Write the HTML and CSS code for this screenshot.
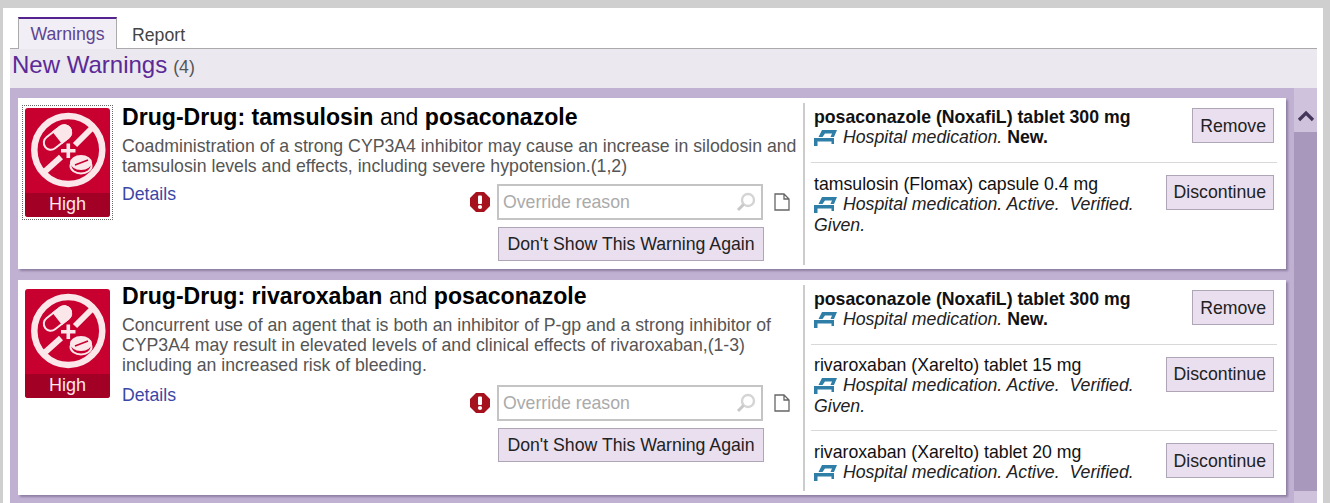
FILE: index.html
```html
<!DOCTYPE html>
<html lang="en">
<head>
    <meta charset="UTF-8">
    <title>Warnings</title>
    <link rel="stylesheet" href="styles.css">
</head>
<body>
<svg class="defs" width="0" height="0">
    <symbol id="no-drug" viewBox="0 0 85 85">
        <circle cx="43.3" cy="42" r="34" fill="none" stroke="#fbe6ea" stroke-width="6.5"/>
        <path d="M17 66L36 49M50 37L69 18" stroke="#fbe6ea" stroke-width="6" fill="none"/>
        <g transform="rotate(-38 32.5 29.5)">
            <rect x="17" y="22.5" width="31" height="14" rx="7" fill="#c8002f" stroke="#fbe6ea" stroke-width="2"/>
            <path d="M32 21.5H41a8 8 0 0 1 0 16H32Z" fill="#fbe6ea"/>
        </g>
        <path d="M43.3 35.5V50M36 42.7H50.5" stroke="#fbe6ea" stroke-width="3.6"/>
        <ellipse cx="56" cy="58" rx="10.5" ry="7.5" fill="#c8002f" stroke="#fbe6ea" stroke-width="2"/>
        <ellipse cx="56" cy="54.5" rx="11" ry="7.5" fill="#fbe6ea"/>
        <path d="M50 57L63 52" stroke="#c8002f" stroke-width="1.6"/>
    </symbol>
    <symbol id="bed" viewBox="0 0 23 16">
        <path d="M8 0H23L20 7H16.5L18 3.5H11L8.5 7H4.5Z" fill="#2f7ea8"/>
        <path d="M0 8H20V14H17.5V11.5H3.5V16H0Z" fill="#2f7ea8"/>
    </symbol>
    <symbol id="stop" viewBox="0 0 20 20">
        <polygon points="6,0 14,0 20,6 20,14 14,20 6,20 0,14 0,6" fill="#a5121e"/>
        <rect x="8" y="3.5" width="4" height="8.5" rx="1" fill="#fff"/>
        <circle cx="10" cy="15" r="2.1" fill="#fff"/>
    </symbol>
    <symbol id="search" viewBox="0 0 20 20">
        <circle cx="12" cy="8" r="6" fill="none" stroke="#d4d4d4" stroke-width="2.4"/>
        <path d="M7.5 12.5L2 18" stroke="#c8c8c8" stroke-width="3"/>
    </symbol>
    <symbol id="doc" viewBox="0 0 16 18">
        <path d="M1 1H10L15 6V17H1Z M10 1V6H15" fill="#fff" stroke="#666" stroke-width="1.3"/>
    </symbol>
</svg>

<div class="window">
    <div class="tabs">
        <div class="tab active">Warnings</div>
        <div class="tab">Report</div>
    </div>
    <div class="head">
        <h1>New Warnings</h1>
        <span class="count">(4)</span>
    </div>

    <div class="panel">
        <div class="list">

            <!-- first warning -->
            <div class="card card-first">
                <div class="info">
                    <div class="sev-focus">
                        <div class="sev">
                            <svg class="sev-pic"><use href="#no-drug"/></svg>
                            <div class="sev-label">High</div>
                        </div>
                    </div>
                    <div class="main">
                        <h2><b>Drug-Drug: tamsulosin</b> and <b>posaconazole</b></h2>
                        <p class="desc">Coadministration of a strong CYP3A4 inhibitor may cause an increase in silodosin and tamsulosin levels and effects, including severe hypotension.(1,2)</p>
                        <div class="actions">
                            <a class="details" href="#">Details</a>
                            <div class="override">
                                <div class="override-row">
                                    <svg class="stop"><use href="#stop"/></svg>
                                    <div class="reason"><span>Override reason</span><svg class="search"><use href="#search"/></svg></div>
                                    <svg class="doc"><use href="#doc"/></svg>
                                </div>
                                <button class="btn btn-wide">Don't Show This Warning Again</button>
                            </div>
                        </div>
                    </div>
                </div>
                <div class="meds">
                    <div class="med">
                        <div class="med-text">
                            <strong>posaconazole (NoxafiL) tablet 300 mg</strong>
                            <div><svg class="bed"><use href="#bed"/></svg><em>Hospital medication.</em> <strong>New.</strong></div>
                        </div>
                        <button class="btn">Remove</button>
                    </div>
                    <div class="med">
                        <div class="med-text">
                            <div>tamsulosin (Flomax) capsule 0.4 mg</div>
                            <div><svg class="bed"><use href="#bed"/></svg><em>Hospital medication. Active.&nbsp; Verified. Given.</em></div>
                        </div>
                        <button class="btn">Discontinue</button>
                    </div>
                </div>
            </div>

            <!-- second warning -->
            <div class="card">
                <div class="info">
                    <div class="sev">
                        <svg class="sev-pic"><use href="#no-drug"/></svg>
                        <div class="sev-label">High</div>
                    </div>
                    <div class="main">
                        <h2><b>Drug-Drug: rivaroxaban</b> and <b>posaconazole</b></h2>
                        <p class="desc">Concurrent use of an agent that is both an inhibitor of P-gp and a strong inhibitor of CYP3A4 may result in elevated levels of and clinical effects of rivaroxaban,(1-3) including an increased risk of bleeding.</p>
                        <div class="actions">
                            <a class="details" href="#">Details</a>
                            <div class="override">
                                <div class="override-row">
                                    <svg class="stop"><use href="#stop"/></svg>
                                    <div class="reason"><span>Override reason</span><svg class="search"><use href="#search"/></svg></div>
                                    <svg class="doc"><use href="#doc"/></svg>
                                </div>
                                <button class="btn btn-wide">Don't Show This Warning Again</button>
                            </div>
                        </div>
                    </div>
                </div>
                <div class="meds">
                    <div class="med">
                        <div class="med-text">
                            <strong>posaconazole (NoxafiL) tablet 300 mg</strong>
                            <div><svg class="bed"><use href="#bed"/></svg><em>Hospital medication.</em> <strong>New.</strong></div>
                        </div>
                        <button class="btn">Remove</button>
                    </div>
                    <div class="med">
                        <div class="med-text">
                            <div>rivaroxaban (Xarelto) tablet 15 mg</div>
                            <div><svg class="bed"><use href="#bed"/></svg><em>Hospital medication. Active.&nbsp; Verified. Given.</em></div>
                        </div>
                        <button class="btn">Discontinue</button>
                    </div>
                    <div class="med">
                        <div class="med-text">
                            <div>rivaroxaban (Xarelto) tablet 20 mg</div>
                            <div><svg class="bed"><use href="#bed"/></svg><em>Hospital medication. Active.&nbsp; Verified.</em></div>
                        </div>
                        <button class="btn">Discontinue</button>
                    </div>
                </div>
            </div>

        </div>

        <div class="scroll">
            <div class="scroll-up">
                <svg width="18" height="12" viewBox="0 0 18 12"><path d="M2 10L9 3L16 10" fill="none" stroke="#43365a" stroke-width="3.2"/></svg>
            </div>
            <div class="scroll-track"></div>
            <div class="scroll-down"></div>
        </div>
    </div>
</div>
</body>
</html>
```

FILE: styles.css
```css
html, body {
    height: 100%;
}
body {
    margin: 0;
    background: #cfcfcf;
    font-family: "Liberation Sans", Arial, sans-serif;
    font-size: 17.7px;
    color: #111;
    overflow: hidden;
}
.defs {
    display: block;
    height: 0;
}
.window {
    box-sizing: border-box;
    height: 503px;
    margin: 0 7px 0 3px;
    position: relative;
    top: 8px;
    padding: 9px 6px 0 7px;
    background: #fff;
    display: flex;
    flex-direction: column;
}

/* tabs */
.tabs {
    display: flex;
    height: 31px;
    padding-left: 8px;
    border-bottom: 1px solid #aaa;
    flex: none;
}
.tab {
    padding: 8px 14px 0 15px;
    color: #444;
}
.tab.active {
    box-sizing: border-box;
    width: 99px;
    height: 32px;
    padding: 5px 0 0;
    text-align: center;
    color: #5f4490;
    background: #f1eff5;
    border: 1px solid #aaa;
    border-top: 2px solid #55238f;
    border-bottom: none;
}

/* header */
.head {
    flex: none;
    height: 39px;
    box-sizing: border-box;
    padding: 2px 0 0 2px;
    background: #ebe8f0;
    display: flex;
    align-items: baseline;
    gap: 6px;
}
.head h1 {
    margin: 0;
    font-size: 24px;
    font-weight: normal;
    color: #5b2a96;
}
.count {
    font-size: 17.7px;
    color: #555;
}

/* list */
.panel {
    flex: 1;
    min-height: 0;
    display: flex;
    background: #c0b0d2;
    overflow: hidden;
}
.list {
    flex: 1;
    min-width: 0;
    padding: 10px 8px 0;
}
.card {
    display: flex;
    background: #fff;
    padding: 5px 9px 4px 0;
    margin-bottom: 11px;
    box-shadow: 2px 2px 2px #8f80a3;
}
.info {
    width: 787px;
    flex: none;
    box-sizing: border-box;
    display: flex;
    padding-left: 7px;
    border-right: 2px solid #ccc;
}
.main {
    flex: 1;
    min-width: 0;
    margin-left: 12px;
    padding-right: 6px;
}
.card-first .main {
    padding-bottom: 4px;
}

/* severity tile */
.sev {
    flex: none;
    width: 85px;
    height: 109px;
    margin-top: 4px;
    background: #c8002f;
    border-radius: 3px;
    overflow: hidden;
    display: flex;
    flex-direction: column;
}
.sev-focus {
    flex: none;
    height: 109px;
    margin-top: 5px;
    outline: 1px dotted #666;
    outline-offset: 2px;
}
.sev-focus .sev {
    margin-top: 0;
}
.sev-pic {
    width: 85px;
    height: 85px;
    flex: none;
}
.sev-label {
    flex: 1;
    background: #a30026;
    color: #fbe6ea;
    font-size: 18px;
    line-height: 23px;
    text-align: center;
}

/* warning text */
.main h2 {
    margin: -1px 0 2px;
    font-size: 23.1px;
    line-height: 24px;
    font-weight: normal;
    color: #000;
}
.card-first .main h2 {
    margin: 2px 0 0;
}
.desc {
    margin: 7px 0 10px;
    line-height: 20px;
    color: #555;
}
.card-first .desc {
    margin-bottom: 8px;
}
.actions {
    display: flex;
    justify-content: space-between;
    align-items: flex-start;
}
.details {
    color: #3b46a6;
    text-decoration: none;
    line-height: 20px;
}
.override {
    margin-right: 7px;
    display: flex;
    flex-direction: column;
    gap: 7px;
    align-items: flex-end;
}
.override-row {
    display: flex;
    align-items: center;
}
.stop {
    width: 20px;
    height: 20px;
    margin-right: 7px;
}
.reason {
    box-sizing: border-box;
    width: 266px;
    height: 36px;
    border: 2px solid #c4c4c4;
    padding: 0 5px 0 4px;
    display: flex;
    align-items: center;
    justify-content: space-between;
    color: #aaa;
}
.search {
    width: 20px;
    height: 20px;
}
.doc {
    width: 16px;
    height: 18px;
    margin: 0 0 0 11px;
}
.btn {
    box-sizing: border-box;
    height: 35px;
    padding: 1px 7px 0;
    background: #eadfef;
    border: 1px solid #aea5b6;
    border-radius: 0;
    font-family: inherit;
    font-size: 17.7px;
    color: #222;
    flex: none;
}
.btn-wide {
    width: 266px;
    height: 34px;
    margin-right: 26px;
}

/* medications */
.meds {
    flex: 1;
    min-width: 0;
    padding-left: 6px;
}
.med {
    display: flex;
    justify-content: space-between;
    align-items: flex-start;
    padding: 10px 3px 14px;
    line-height: 20.4px;
    border-bottom: 1px solid #d8d8d8;
}
.med:first-child {
    padding: 4px 3px 14px;
}
.med:last-child {
    padding: 11px 3px 8px;
    border-bottom: none;
}
.med .btn {
    margin: 2px 0 0 12px;
}
.med:first-child .btn,
.med:last-child .btn {
    margin-top: 1px;
}
.med-text {
    flex: 1;
    min-width: 0;
}
.med-text em {
    color: #222;
}
.bed {
    width: 23px;
    height: 16px;
    margin-right: 6px;
    vertical-align: -3px;
}

/* scrollbar */
.scroll {
    flex: none;
    width: 23px;
    display: flex;
    flex-direction: column;
    background: #a898bc;
}
.scroll-up {
    height: 44px;
    background: #cfc2dc;
    display: flex;
    justify-content: center;
    padding-top: 22px;
    box-sizing: border-box;
}
.scroll-track {
    flex: 1;
}
.scroll-down {
    height: 20px;
    background: #cfc2dc;
}
```
